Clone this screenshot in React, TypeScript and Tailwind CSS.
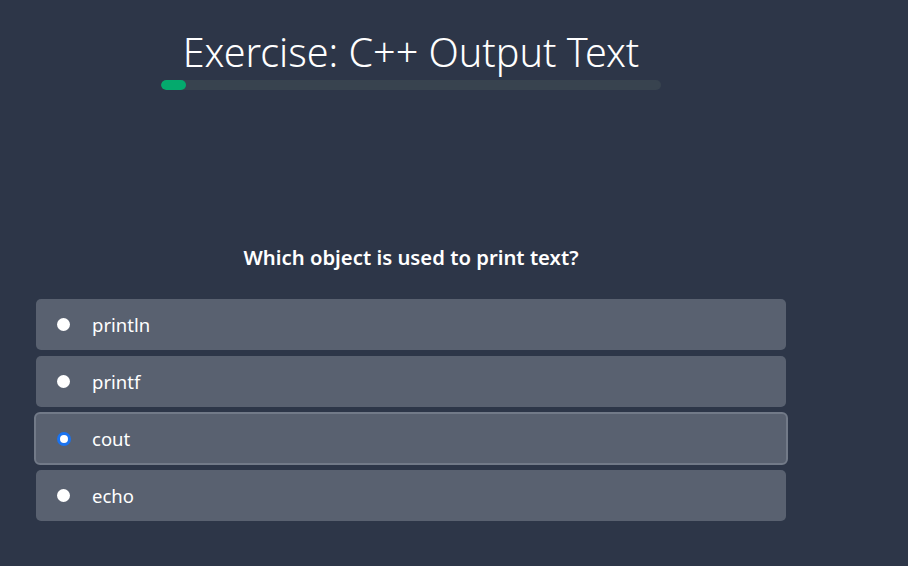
import React from "react";

const options = [
  { label: "println", checked: false },
  { label: "printf", checked: false },
  { label: "cout", checked: true },
  { label: "echo", checked: false },
];

export default function App() {
  return (
    <div
      className="w-[908px] h-[566px] bg-[#2d3648] overflow-hidden"
      style={{ fontFamily: '"Noto Sans", "Open Sans", sans-serif' }}
    >
      <div className="ml-[36px] w-[750px] flex flex-col items-center">
        <h1 className="mt-[26px] text-[39.5px] leading-[52px] text-white font-light">
          Exercise: C++ Output Text
        </h1>
        <div className="mt-[2px] w-[500px] h-[10px] rounded-full bg-[#38434f] overflow-hidden">
          <div className="h-full w-[25px] rounded-full bg-[#04aa6d]" />
        </div>
        <p className="mt-[153px] text-[20.3px] leading-[28px] font-semibold text-white">
          Which object is used to print text?
        </p>
        <div className="mt-[28px] w-full flex flex-col gap-[6px]">
          {options.map((o) => (
            <div
              key={o.label}
              className={
                o.checked
                  ? "h-[53px] -my-[1px] -mx-[2px] flex items-center rounded-[6px] bg-[#596170] border-2 border-[#727a88] pl-[21px]"
                  : "h-[51px] flex items-center rounded-[5px] bg-[#596170] pl-[21px]"
              }
            >
              {o.checked ? (
                <span className="w-[14px] h-[14px] rounded-full bg-white border-[3px] border-[#1a73f0] shrink-0" />
              ) : (
                <span className="w-[13px] h-[13px] rounded-full bg-white shrink-0" />
              )}
              <span
                className={
                  o.checked
                    ? "ml-[21px] text-[18.5px] text-white leading-[24px]"
                    : "ml-[22px] text-[18.5px] text-white leading-[24px]"
                }
              >
                {o.label}
              </span>
            </div>
          ))}
        </div>
      </div>
    </div>
  );
}
